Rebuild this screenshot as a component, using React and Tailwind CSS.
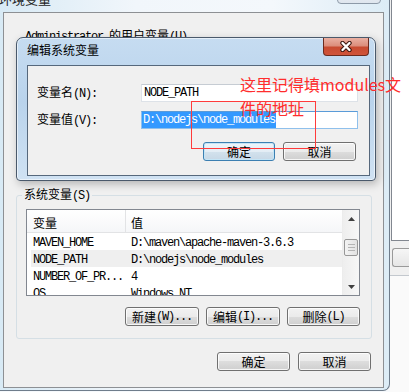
import React from 'react';

// splits a label into CJK runs and half-width runs (the old SimSun look: latin is 6px wide)
const Mixed = ({ text }) => (
  <>
    {text.match(/[\x00-\xff]+|[^\x00-\xff]+/g).map((run, i) =>
      run.charCodeAt(0) < 256 ? (
        <span key={i} className="font-['Liberation_Mono',monospace] text-[12px] tracking-[-1.2px]">
          {run}
        </span>
      ) : (
        <span key={i}>{run}</span>
      )
    )}
  </>
);

const Button = ({ label, width, isDefault }) => (
  <div
    className={`${width} h-[19px] flex items-center justify-center rounded-[3px] border whitespace-nowrap leading-[12px] ${
      isDefault
        ? 'border-[#3c7fb1] bg-[linear-gradient(#eef5fa_0%,#e3edf5_50%,#d3e2ed_50%,#c7d8e6_100%)] shadow-[inset_0_0_0_1px_#c4e5f6]'
        : 'border-[#707070] bg-[linear-gradient(#f2f2f2_0%,#ebebeb_50%,#dddddd_50%,#cfcfcf_100%)] shadow-[inset_0_0_0_1px_rgba(255,255,255,0.8)]'
    }`}
  >
    <Mixed text={label} />
  </div>
);

const rows = [
  { name: 'MAVEN_HOME', value: 'D:\\maven\\apache-maven-3.6.3' },
  { name: 'NODE_PATH', value: 'D:\\nodejs\\node_modules', selected: true },
  { name: 'NUMBER_OF_PR...', value: '4' },
  { name: 'OS', value: 'Windows_NT' },
];

const Arrow = ({ down }) => (
  <svg width="7" height="4" viewBox="0 0 7 4">
    <path d={down ? 'M0 0H7L3.5 4Z' : 'M0 4H7L3.5 0Z'} fill="#404040" />
  </svg>
);

const CloseGlyph = () => (
  <svg width="14" height="11" viewBox="0 0 14 11">
    <path d="M3.5 2L10.5 9M10.5 2L3.5 9" stroke="#3b1710" strokeWidth="4.4" strokeLinecap="round" />
    <path d="M3.5 2L10.5 9M10.5 2L3.5 9" stroke="#ffffff" strokeWidth="2.4" strokeLinecap="round" />
  </svg>
);

const Scrollbar = () => (
  <div className="w-[17px] flex flex-col border-l border-[#ececec] bg-[linear-gradient(90deg,#eeeeee,#f7f7f7)]">
    <div className="h-[17px] flex items-center justify-center">
      <Arrow />
    </div>
    <div className="flex-1 px-[1px]">
      <div className="mt-[12px] h-[17px] rounded-[2px] border border-[#979797] bg-[linear-gradient(90deg,#f3f3f3,#e2e2e2)] flex flex-col items-center justify-center gap-[2px]">
        <div className="w-[7px] h-[1px] bg-[#b4b4b4]" />
        <div className="w-[7px] h-[1px] bg-[#b4b4b4]" />
        <div className="w-[7px] h-[1px] bg-[#b4b4b4]" />
      </div>
    </div>
    <div className="h-[17px] flex items-center justify-center">
      <Arrow down />
    </div>
  </div>
);

const EditDialog = () => (
  <div className="absolute left-[12px] top-[24px] w-[360px] h-[144px] flex flex-col rounded-t-[7px] rounded-b-[4px] border border-[#4a596b] bg-[linear-gradient(#c6dcf1,#b9d3ec_45%,#d0e2f3)] shadow-[inset_0_0_0_1px_rgba(255,255,255,0.55),2px_3px_8px_rgba(0,0,0,0.25)]">
    <div className="relative h-[27px] pl-[10px] pt-[6px] leading-[12px]">
      编辑系统变量
      <div className="absolute right-[6px] top-0 w-[46px] h-[18px] flex items-center justify-center rounded-b-[4px] border border-t-0 border-[#6b2b1f] bg-[linear-gradient(#eab0a2,#dc8e7c_45%,#c84b31_55%,#d0543a)]">
        <CloseGlyph />
      </div>
    </div>

    <div className="ml-[10px] w-[343px] h-[111px] flex flex-col border border-[#56687c] bg-[#f0f0f0] pt-[18px]">
      <div className="flex items-center pl-[9px]">
        <div className="w-[104px] leading-[12px] whitespace-nowrap">
          <Mixed text="变量名(N):" />
        </div>
        <div className="w-[217px] h-[18px] flex items-center pl-[2px] border border-[#dde2e8] border-t-[#c6ccd3] bg-white leading-[12px]">
          <Mixed text="NODE_PATH" />
        </div>
      </div>

      <div className="mt-[9px] flex items-center pl-[9px]">
        <div className="w-[104px] leading-[12px] whitespace-nowrap">
          <Mixed text="变量值(V):" />
        </div>
        <div className="w-[217px] h-[18px] flex items-stretch border border-[#8fc0ec] border-t-[#5a9bd8] bg-white">
          <span className="flex items-center pl-[1px] pr-[1px] bg-[#3399ff] text-white leading-[12px]">
            <Mixed text="D:\nodejs\node_modules" />
          </span>
        </div>
      </div>

      <div className="mt-[13px] flex justify-end gap-[8px] pr-[13px]">
        <Button label="确定" width="w-[72px]" isDefault />
        <Button label="取消" width="w-[73px]" />
      </div>
    </div>
  </div>
);

const App = () => {
  return (
    <div className="relative w-[409px] h-[392px] overflow-hidden flex bg-[#f6f9fc] text-[12px] leading-[12px] text-black font-['Noto_Sans_CJK_SC',sans-serif]">
      {/* environment variables window, behind the edit dialog */}
      <div className="relative w-[390px] h-[391px] shrink-0 pl-[3px] pt-[12px] border-r border-b border-[#6f7d8c] rounded-br-[7px] bg-[linear-gradient(90deg,#d8eaf5,#f1f6fb_35%,#f4f8fc_70%,#dcecf6)]">
        <div className="absolute left-[-1px] top-[-8px] text-[13px] leading-[13px] text-[#1e1e1e]">环境变量</div>
        <div className="absolute left-[337px] top-[-15px] w-[44px] h-[19px] rounded-b-[4px] border border-[#8d9aa8] bg-[linear-gradient(#eef2f6,#dfe6ee)]" />

        <div className="relative w-[381px] h-[376px] flex flex-col border border-[#8d9094] bg-[#f0f0f0]">
          <div className="ml-[21px] mt-[16px] h-[12px] whitespace-nowrap">
            <Mixed text="Administrator 的用户变量(U)" />
          </div>

          <fieldset className="mt-[147px] ml-[12px] w-[356px] rounded-[3px] border border-[#d5dfe5] pl-[9px] pr-[11px] pb-[12px]">
            <legend className="ml-[-4px] px-[2px] leading-[12px]">
              <Mixed text="系统变量(S)" />
            </legend>

            <div className="mt-[7px] h-[87px] flex overflow-hidden border border-[#828790] bg-white">
              <div className="flex-1 flex flex-col overflow-hidden">
                <div className="h-[23px] shrink-0 flex border-b border-[#e2e3e5] bg-[linear-gradient(#ffffff,#f5f6f8)]">
                  <div className="w-[99px] flex items-center pl-[6px] pt-[3px] border-r border-[#e2e3e5]">变量</div>
                  <div className="flex-1 flex items-center pl-[5px] pt-[3px]">值</div>
                </div>
                {rows.map(row => (
                  <div
                    key={row.name}
                    className={`h-[17px] shrink-0 ml-[4px] flex items-center whitespace-nowrap ${row.selected ? 'bg-[#efefef]' : ''}`}
                  >
                    <div className="w-[100px] pl-[2px]">
                      <Mixed text={row.name} />
                    </div>
                    <div>
                      <Mixed text={row.value} />
                    </div>
                  </div>
                ))}
              </div>
              <Scrollbar />
            </div>

            <div className="mt-[11px] flex justify-end gap-[7px]">
              <Button label="新建(W)..." width="w-[74px]" />
              <Button label="编辑(I)..." width="w-[74px]" />
              <Button label="删除(L)" width="w-[73px]" />
            </div>
          </fieldset>

          <div className="mt-[13px] flex justify-end gap-[8px] pr-[12px]">
            <Button label="确定" width="w-[73px]" />
            <Button label="取消" width="w-[73px]" />
          </div>

          <EditDialog />
        </div>
      </div>

      {/* system properties window peeking out on the right */}
      <div className="w-[19px] shrink-0 flex flex-col bg-[#f0f0f0]">
        <div className="h-[241px] ml-[1px] border-l border-b border-[#828790] bg-white" />
        <div className="mt-[7px] ml-[2px] h-[19px] rounded-l-[3px] border border-r-0 border-[#9a9a9a] bg-[linear-gradient(#f6f6f6,#e6e6e6)]" />
        <div className="mt-[8px] flex-1 border-t border-[#c3c8ce] bg-[#fafafa]" />
      </div>

      {/* red note drawn over the screenshot */}
      <div className="absolute left-[240px] top-[72px] text-[16px] leading-[24px] text-[#ff2d2d] whitespace-nowrap">
        <div>这里记得填modules文</div>
        <div>件的地址</div>
      </div>
      <div className="absolute left-[191px] top-[101px] w-[125px] h-[48px] border border-[#ff3b3b]" />
    </div>
  );
};

export default App;
